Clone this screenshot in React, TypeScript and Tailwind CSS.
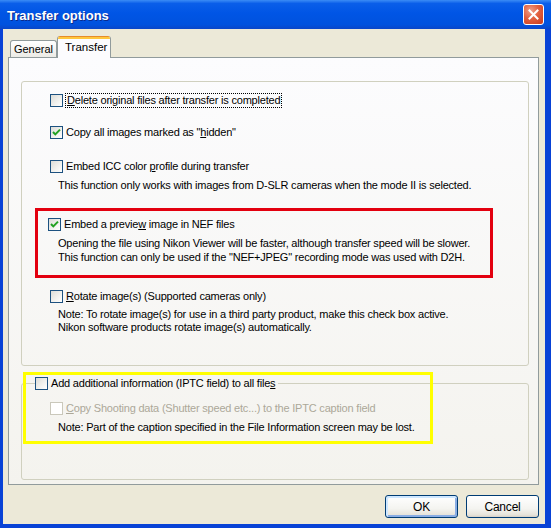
import React from "react";

const Check = ({ checked = false, disabled = false }: { checked?: boolean; disabled?: boolean }) => (
  <span
    className={
      "w-[13px] h-[13px] shrink-0 border flex items-center justify-center " +
      (disabled
        ? "border-[#cac8bb] bg-white"
        : "border-[#1c5180] bg-[linear-gradient(135deg,#dcdcd7_0%,#f2f2ef_60%,#ffffff_100%)]")
    }
  >
    {checked && (
      <svg width="11" height="11" viewBox="0 0 11 11">
        <path d="M2 5 L4.3 7.4 L9 2.6" fill="none" stroke="#21a121" strokeWidth="2" />
      </svg>
    )}
  </span>
);

const Row = ({ children, checked, disabled }: { children: React.ReactNode; checked?: boolean; disabled?: boolean }) => (
  <div className="flex items-center h-[13px] gap-[3px]">
    <Check checked={checked} disabled={disabled} />
    <span className={"leading-[13px] whitespace-nowrap " + (disabled ? "text-[#aca899]" : "")}>{children}</span>
  </div>
);

const U = ({ children }: { children: React.ReactNode }) => <span className="underline underline-offset-[1px]">{children}</span>;

const Button = ({ children, isDefault }: { children: React.ReactNode; isDefault?: boolean }) => (
  <button
    className={
      "w-[73px] h-[23px] rounded-[3px] border border-[#003c74] bg-[linear-gradient(to_bottom,#ffffff_0%,#f4f4f0_60%,#e6e3da_90%,#d6d0c5_100%)] text-[12px] text-black " +
      (isDefault ? "shadow-[inset_1px_1px_0_1px_#cee7ff,inset_-1px_-1px_0_1px_#89ade4]" : "")
    }
  >
    {children}
  </button>
);

export default function App() {
  return (
    <div className="w-[551px] h-[528px] flex flex-col bg-[#0842d6] font-['Liberation_Sans',Arial,sans-serif] text-[11px] tracking-[-0.2px] text-black overflow-hidden">
      {/* title bar */}
      <div className="h-[29px] shrink-0 flex items-center pl-[7px] pr-[7px] pt-[2px] bg-[linear-gradient(to_bottom,#3b8cf5_0%,#0a5ee9_12%,#0055e5_45%,#0052de_85%,#0a46c8_100%)]">
        <span className="text-white font-bold text-[13px] tracking-normal [text-shadow:1px_1px_0_#0b2a8c]">Transfer options</span>
        <span className="ml-auto w-[21px] h-[21px] -mt-[2px] rounded-[3px] border border-white bg-[radial-gradient(circle_at_35%_30%,#f0a08a_0%,#e2603f_45%,#c83a1c_100%)] flex items-center justify-center">
          <svg width="11" height="11" viewBox="0 0 11 11">
            <path d="M1.5 1.5 L9.5 9.5 M9.5 1.5 L1.5 9.5" stroke="white" strokeWidth="2" strokeLinecap="square" />
          </svg>
        </span>
      </div>

      {/* body */}
      <div className="flex-1 ml-[3px] mr-[6px] mb-[4px] bg-[#ece9d8] flex flex-col">
        {/* tabs */}
        <div className="h-[28px] shrink-0 flex items-end pl-[7px] text-[11.5px] tracking-normal">
          <div className="h-[17px] w-[47px] justify-center text-[11px] flex items-center border border-b-0 border-[#919b9c] rounded-t-[3px] bg-[linear-gradient(to_bottom,#ffffff,#ecebe6)]">
            General
          </div>
          <div className="relative z-10 -mb-px h-[22px] w-[54px] flex flex-col border-x border-[#919b9c] rounded-t-[3px] overflow-hidden bg-[#fcfcfe]">
            <div className="h-[3px] shrink-0 bg-[linear-gradient(to_bottom,#e68b2c_0_1px,#ffc73c_1px)]" />
            <div className="flex-1 flex items-center pl-[7px] pb-[3px]">Transfer</div>
          </div>
        </div>

        {/* tab page */}
        <div className="relative ml-[5px] w-[531px] h-[428px] border border-[#919b9c] bg-[linear-gradient(to_bottom,#fcfcfe,#f4f3ee)] pl-[12px] pr-[9px] pt-[23px]">
          {/* group 1 */}
          <div className="h-[285px] border border-[#d0d0bf] rounded-[3px] pt-[12px] pl-[28px]">
            <div className="flex items-center h-[13px] gap-[3px]">
              <Check />
              <span className="leading-[13px] border border-dotted border-black px-[1px] -ml-[1px]">
                <U>D</U>elete original files after transfer is completed
              </span>
            </div>
            <div className="mt-[19px]">
              <Row checked>
                Copy all images marked as "<U>h</U>idden"
              </Row>
            </div>
            <div className="mt-[21px]">
              <Row>
                Embed ICC color <U>p</U>rofile during transfer
              </Row>
            </div>
            <p className="mt-[5px] ml-[8px] leading-[14px]">
              This function only works with images from D-SLR cameras when the mode II is selected.
            </p>

            <div className="mt-[16px] -ml-[15px] w-[458px] border-[3px] border-[#e3000f] pt-[7px] pl-[10px] pb-[11px]">
              <Row checked>
                Embed a previe<U>w</U> image in NEF files
              </Row>
              <p className="mt-[5px] ml-[10px] leading-[14px]">
                Opening the file using Nikon Viewer will be faster, although transfer speed will be slower.
                <br />
                This function can only be used if the "NEF+JPEG" recording mode was used with D2H.
              </p>
            </div>

            <div className="mt-[12px]">
              <Row>
                <U>R</U>otate image(s) (Supported cameras only)
              </Row>
            </div>
            <p className="mt-[5px] ml-[8px] leading-[13px]">
              Note: To rotate image(s) for use in a third party product, make this check box active.
              <br />
              Nikon software products rotate image(s) automatically.
            </p>
          </div>

          {/* group 2 */}
          <fieldset className="mt-[11px] border border-[#d0d0bf] rounded-[3px] pb-[45px]">
            <legend className="ml-[13px] pr-[3px]">
              <span className="flex items-center h-[13px] gap-[3px]">
                <Check />
                <span className="leading-[13px]">
                  Add additional information (IPTC field) to all file<U>s</U>
                </span>
              </span>
            </legend>
            <div className="pl-[28px]">
              <div className="mt-[12px]">
                <Row disabled>
                  <U>C</U>opy Shooting data (Shutter speed etc...) to the IPTC caption field
                </Row>
              </div>
              <p className="mt-[5px] ml-[8px] leading-[14px]">
                Note: Part of the caption specified in the File Information screen may be lost.
              </p>
            </div>
          </fieldset>

          {/* yellow annotation */}
          <div className="absolute left-[14px] top-[314px] w-[410px] h-[72px] border-[3px] border-[#ffff00] pointer-events-none" />
        </div>

        {/* buttons */}
        <div className="mt-[10px] mr-[6px] flex justify-end gap-[8px]">
          <Button isDefault>OK</Button>
          <Button>Cancel</Button>
        </div>
      </div>
    </div>
  );
}
